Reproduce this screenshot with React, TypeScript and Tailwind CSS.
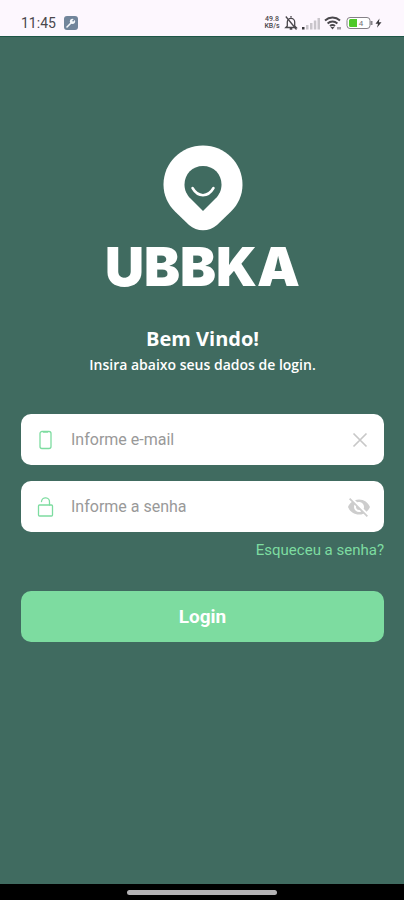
import { useState } from "react";

function StatusBar() {
  return (
    <header className="flex h-[37px] items-end justify-between border-b border-[#1d5647] bg-[#fdf7fe] pr-[22px] pb-1 pl-[21px] text-[#4a474c]">
      <div className="flex items-center gap-2">
        <span className="text-[14px] leading-[18px]">11:45</span>
        <svg width="14" height="14" viewBox="0 0 14 14">
          <rect width="14" height="14" rx="3" fill="#71859b" />
          <circle cx="8.5" cy="5.3" r="2.6" fill="#f4f7fa" />
          <path d="M7 7 3 11" stroke="#f4f7fa" strokeWidth="1.6" strokeLinecap="round" />
          <path d="M8.6 5.2 11 2.8" stroke="#71859b" strokeWidth="1.3" />
        </svg>
      </div>

      <div className="flex h-[18px] items-center gap-1">
        <div className="w-4 text-center text-[7px] leading-[7px] font-medium">
          <p>49.8</p>
          <p>KB/s</p>
        </div>

        {/* silenciado */}
        <svg width="14" height="16" viewBox="0 0 14 16" fill="none" stroke="currentColor" strokeWidth="1.3">
          <path d="M7 1v1.5M3.3 11V7a3.7 3.7 0 0 1 7.4 0v4l1.5 1.5H1.8L3.3 11ZM5.7 14h2.6" />
          <path d="m1.800 1.500 10.700 13" />
        </svg>

        {/* sinal */}
        <svg width="18" height="13" viewBox="0 0 18 13">
          <rect x="0" y="10" width="2.5" height="2.5" fill="#3a383c" />
          <g fill="#c9c5cb">
            <rect x="4" y="8" width="2.5" height="4.5" />
            <rect x="8" y="6" width="2.5" height="6.5" />
            <rect x="11.8" y="3.5" width="2.5" height="9" />
            <rect x="15.5" y="1" width="2.5" height="11.5" />
          </g>
        </svg>

        {/* wi-fi */}
        <svg width="18" height="14" viewBox="0 0 18 14" fill="none" stroke="currentColor" strokeWidth="2">
          <path d="M1 4.4a11.5 11.5 0 0 1 15 0M3.6 7.4a7.5 7.5 0 0 1 9.8 0M6 10a4 4 0 0 1 5 0" />
          <path d="m8.5 13.5 2-2.5h-4l2 2.5Z" fill="currentColor" stroke="none" />
          <path d="M14 11v2.5M16 11v2.5" strokeWidth="1" />
        </svg>

        {/* bateria */}
        <svg width="36" height="14" viewBox="0 0 36 14">
          <rect x="1" y="1.5" width="23" height="11" rx="3" fill="#fff" stroke="#858187" />
          <path d="M4.5 3H11v8H4.5A1.5 1.5 0 0 1 3 9.5v-5A1.5 1.5 0 0 1 4.5 3Z" fill="#4fc929" />
          <rect x="24.5" y="5" width="2" height="4" fill="#858187" />
          <text x="15" y="10" textAnchor="middle" fontSize="8" fill="#77747a">4</text>
          <path d="M33.5 2.5 29.5 7.8H32l-1 4 4.5-5.6h-2.6l.6-3.7Z" fill="#3a383c" />
        </svg>
      </div>
    </header>
  );
}

function Logo() {
  return (
    <div className="flex flex-col items-center">
      <svg width="80" height="86" viewBox="0 0 80 86">
        <path
          d="M40 .5C18 .5.5 18 .5 39.5c0 11 4.5 20 11.5 27L26 80c8 7 20 7 28 0l14-13.5c7-7 11.5-16 11.5-27C79.5 18 62 .5 40 .5Z"
          fill="#fff"
        />
        <path
          d="M40 21c-10.5 0-18.5 8-18.5 18.5 0 6 2.5 10.5 6 14L40 66l12.5-12.5c3.5-3.5 6-8 6-14C58.5 29 50.500 21 40 21Z"
          fill="#406b60"
        />
        <path d="M29.5 43c5.5 9.5 15.5 9.5 21 0" fill="none" stroke="#fff" strokeWidth="2.5" strokeLinecap="round" />
      </svg>
      <h1 className="mt-2 font-['Inter','Roboto',sans-serif] text-[54px] leading-[56px] font-black text-white">UBBKA</h1>
    </div>
  );
}

const fieldClass = "flex h-[51px] items-center rounded-[10px] bg-white pr-[13px] pl-[15px]";
const inputClass =
  "ml-4 min-w-0 flex-1 bg-transparent text-[16px] leading-5 text-[#555] outline-none placeholder:text-[#999]";

export default function App() {
  const [email, setEmail] = useState("");
  const [senha, setSenha] = useState("");
  const [visivel, setVisivel] = useState(false);

  return (
    <div className="flex min-h-screen flex-col bg-[#406b60] font-['Roboto','Liberation_Sans',sans-serif]">
      <StatusBar />

      <main className="flex-1 pt-[108px] pr-5 pl-[21px]">
        <Logo />

        <div className="mt-[30px] text-center font-['Open_Sans','Noto_Sans',sans-serif] text-white">
          <h2 className="text-[20px] leading-7 font-bold">Bem Vindo!</h2>
          <p className="text-[14px] leading-6 font-semibold">Insira abaixo seus dados de login.</p>
        </div>

        <form className="mt-[37px]" onSubmit={(e) => e.preventDefault()}>
          <div className="flex flex-col gap-4">
            <div className={fieldClass}>
              <label htmlFor="email" aria-label="E-mail">
                <svg width="19" height="20" viewBox="0 0 19 20" fill="none" stroke="#7ddca0" strokeWidth="1.3">
                  <rect x="4" y="1.5" width="11" height="17" rx="2" />
                  <path d="M7 2.2h5" strokeWidth="1" />
                </svg>
              </label>
              <input
                id="email"
                type="email"
                placeholder="Informe e-mail"
                value={email}
                onChange={(e) => setEmail(e.target.value)}
                className={inputClass}
              />
              <button type="button" aria-label="Limpar" onClick={() => setEmail("")}>
                <svg width="22" height="22" viewBox="0 0 22 22" stroke="#c8c8c8" strokeWidth="1.7">
                  <path d="m4.5 4.5 13 13m0-13-13 13" />
                </svg>
              </button>
            </div>

            <div className={fieldClass}>
              <label htmlFor="senha" aria-label="Senha">
                <svg width="19" height="20" viewBox="0 0 19 20" fill="none" stroke="#7ddca0" strokeWidth="1.3">
                  <rect x="2.5" y="8" width="14" height="11" rx="1" />
                  <path d="M13.5 8V5.200a4 4 0 0 0-8-.7" strokeLinecap="round" />
                </svg>
              </label>
              <input
                id="senha"
                type={visivel ? "text" : "password"}
                placeholder="Informe a senha"
                value={senha}
                onChange={(e) => setSenha(e.target.value)}
                className={inputClass}
              />
              <button type="button" aria-label="Mostrar senha" onClick={() => setVisivel(!visivel)}>
                <svg width="24" height="24" viewBox="0 0 24 24" fill="#cdcdcd">
                  <path d="M12 7c2.76 0 5 2.24 5 5 0 .65-.13 1.26-.36 1.83l2.92 2.92c1.51-1.26 2.7-2.89 3.43-4.75-1.73-4.39-6-7.5-11-7.5-1.4 0-2.74.25-3.98.7l2.16 2.16C10.74 7.13 11.35 7 12 7zM2 4.27l2.28 2.28.46.46C3.08 8.3 1.78 10.02 1 12c1.73 4.39 6 7.5 11 7.5 1.55 0 3.03-.3 4.38-.84l.42.42L19.73 22 21 20.73 3.27 3 2 4.27zM7.53 9.8l1.55 1.55c-.05.21-.08.43-.08.65 0 1.66 1.34 3 3 3 .22 0 .44-.03.65-.08l1.55 1.55c-.67.33-1.41.53-2.2.53-2.76 0-5-2.24-5-5 0-.79.2-1.53.53-2.2z" />
                </svg>
              </button>
            </div>
          </div>

          <div className="mt-2 flex justify-end">
            <a href="#senha" className="text-[15px] leading-5 text-[#7ddca0]">
              Esqueceu a senha?
            </a>
          </div>

          <button
            type="submit"
            className="mt-[31px] h-[51px] w-full rounded-[10px] bg-[#7ddca0] pt-0.5 text-[19px] font-bold text-white"
          >
            Login
          </button>
        </form>
      </main>

      <footer className="flex h-4 items-center justify-center bg-black">
        <div className="h-[5px] w-[150px] rounded-full bg-[#b4b3b5]" />
      </footer>
    </div>
  );
}
